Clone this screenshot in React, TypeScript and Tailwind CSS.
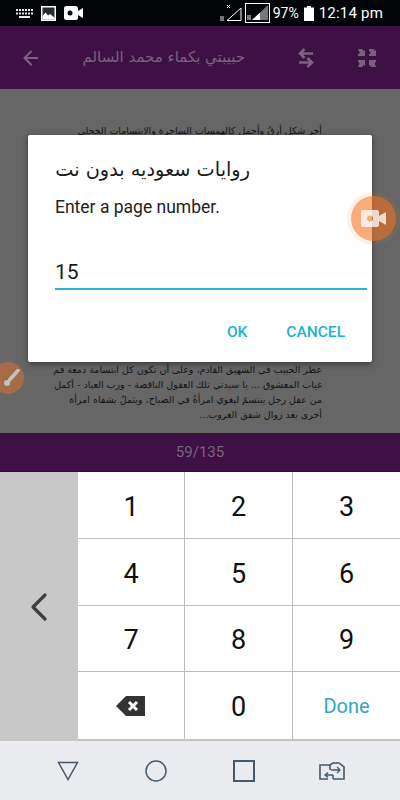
import { ArrowLeft, ChevronLeft } from "lucide-react";

const FONT_UI = "font-['Roboto','Noto_Sans',sans-serif]";

const keys = ["1", "2", "3", "4", "5", "6", "7", "8", "9"];

const StatusBar = () => (
    <div className="h-[26px] bg-[#020508] flex items-center pl-4 pr-[17px] text-white shrink-0">
        <svg width="17" height="9" viewBox="0 0 17 9" fill="#e8e8e8">
            <path d="M0 0h2v2H0zM3 0h2v2H3zM6 0h2v2H6zM9 0h2v2H9zM12 0h2v2h-2zM15 0h2v2h-2zM0 3.500h2v2H0zM3 3.500h2v2H3zM6 3.500h2v2H6zM9 3.500h2v2H9zM12 3.500h2v2h-2zM15 3.500h2v2h-2zM3 7h11v2H3z" />
        </svg>
        <svg className="ml-[8px]" width="15" height="15" viewBox="0 0 15 15">
            <rect x="0" y="0" width="15" height="15" fill="#fff" />
            <rect x="1.500" y="1.500" width="12" height="12" fill="#2a2a2a" />
            <path d="M1.500 13.500V10l3-3.500 2.500 3 2-1.500 4.500 3.500v2z" fill="#fff" />
        </svg>
        <svg className="ml-[8px]" width="19" height="14" viewBox="0 0 19 14">
            <rect x="0" y="0" width="14" height="14" rx="2.500" fill="#fff" />
            <path d="M14 5l5-3v10l-5-3z" fill="#fff" />
            <circle cx="6" cy="7" r="2.500" fill="#020508" />
        </svg>
        <div className="flex-1" />
        <svg width="22" height="18" viewBox="0 0 22 18">
            <path d="M7 16.500L21 4v12.500z" fill="none" stroke="#fff" strokeWidth="1" />
            <path d="M7 1l3 3M10 1L7 4" stroke="#fff" strokeWidth="1" />
            <rect x="0" y="12" width="4" height="5" fill="#777" />
        </svg>
        <svg className="ml-[3px]" width="25" height="20" viewBox="0 0 25 20">
            <rect x="0.500" y="0.500" width="24" height="19" fill="none" stroke="#fff" />
            <path d="M7 17L23 2v15z" fill="#777" />
            <path d="M7 17l8-7.500V17z" fill="#fff" />
            <rect x="2" y="12" width="4" height="5" fill="#777" />
        </svg>
        <span className={`ml-[3px] text-[14px] leading-none ${FONT_UI}`}>97%</span>
        <svg className="ml-[5px]" width="10" height="15" viewBox="0 0 10 15" fill="#fff">
            <rect x="3" y="0" width="4" height="2" />
            <rect x="0" y="1.500" width="10" height="13.500" />
        </svg>
        <span className={`ml-[5px] text-[15px] tracking-[0.2px] leading-none ${FONT_UI}`}>12:14 pm</span>
    </div>
);

const Toolbar = () => (
    <div className="h-[63px] bg-[#3e1045] flex items-center text-[#7c6280] shrink-0">
        <ArrowLeft className="ml-[20px]" size={22} strokeWidth={2.2} />
        <span dir="rtl" className="ml-[39px] w-[164px] text-[15px] whitespace-nowrap font-['DejaVu_Sans',sans-serif]">
            حبيبتي بكماء محمد السالم
        </span>
        <svg className="ml-[52px]" width="18" height="22" viewBox="0 0 18 22" fill="none" stroke="currentColor" strokeWidth="2.600">
            <path d="M16 6.500H3M7.500 2L3 6.500 7.500 11" />
            <path d="M2 15.500h13M10.500 11l4.500 4.500-4.500 4.500" />
        </svg>
        <svg className="ml-[43px]" width="18" height="18" viewBox="0 0 18 18" fill="currentColor">
            <path d="M0 0h4l1.500 2L7 1v6H0V5.500L2 4zM18 1v6h-7V5.500l2-1.500L11 2V0h5l.5 2zM0 11h7v6l-1.500-1L4 18H0l1.500-4L0 13zM11 11h7v2l-1.500 1 1.500 4h-5l-1-2-1 1z" />
        </svg>
    </div>
);

const Reader = () => (
    <div
        dir="rtl"
        className="relative flex-1 min-h-0 bg-[#666666] pt-[34px] pb-[11px] pl-[79px] pr-[78px] flex flex-col justify-between text-[9.5px] leading-[15px] text-[#141414] font-['DejaVu_Sans',sans-serif] whitespace-nowrap"
    >
        <p className="text-justify [text-align-last:justify]">أخر شكلٍ أرقُ وأجمل كالهمسات الساحرة والابتسامات الخجلى</p>
        <div>
            <p className="text-justify [text-align-last:justify]">عطر الحبيب في الشهيق القادم، وعلى أن تكون كل ابتسامة دمعة فم</p>
            <p className="text-justify [text-align-last:justify]">غياب المعشوق ... يا سيدتي تلك العقول الناقصة - ورب العباد - أكمل</p>
            <p className="text-justify [text-align-last:justify]">من عقل رجل يبتسمُ ليغوي امرأةً في الصباح، ويثملُ بشفاه امرأة</p>
            <p>أخرى بعد زوال شفق الغروب...</p>
        </div>
    </div>
);

const PageBar = () => (
    <div className={`h-[38px] bg-[#3e1045] flex items-center justify-center text-[15px] text-[#7c6280] shrink-0 ${FONT_UI}`}>
        59/135
    </div>
);

const Keypad = () => (
    <div className={`h-[270px] flex shrink-0 border-t border-[#1c1c1c] ${FONT_UI}`}>
        <div className="w-[78px] bg-[#c8c8c8] flex items-center justify-center text-[#3f3f3f]">
            <ChevronLeft size={48} strokeWidth={1.6} />
        </div>
        <div className="flex-1 grid grid-cols-[107px_108px_107px] grid-rows-[67px_67px_66px_67px] bg-white border-b-2 border-[#c4c4c4]">
            {keys.map((k, i) => (
                <div
                    key={k}
                    className={`flex items-center justify-center pt-[4px] text-[27px] text-[#111] border-b border-[#bdbdbd] ${
                        i % 3 < 2 ? "border-r" : ""
                    }`}
                >
                    {k}
                </div>
            ))}
            <div className="flex items-center justify-center border-r border-[#bdbdbd]">
                <svg width="30" height="20" viewBox="0 0 30 20">
                    <path d="M29 0H10L0 10l10 10h19z" fill="#333" />
                    <path d="M13 6l8 8M21 6l-8 8" stroke="#fff" strokeWidth="3" />
                </svg>
            </div>
            <div className="flex items-center justify-center pt-[4px] text-[27px] text-[#111] border-r border-[#bdbdbd]">0</div>
            <div className="flex items-center justify-center text-[20px] text-[#2ea6bd]">Done</div>
        </div>
    </div>
);

const NavBar = () => (
    <div className="h-[59px] shrink-0 bg-[#e9ebef] flex items-center text-[#46596a]">
        <svg className="ml-[57px]" width="22" height="20" viewBox="0 0 22 20" fill="none" stroke="currentColor" strokeWidth="1.500">
            <path d="M1.500 1.500h19L11 18.500z" />
        </svg>
        <svg className="ml-[66px]" width="22" height="22" viewBox="0 0 22 22" fill="none" stroke="currentColor" strokeWidth="1.500">
            <circle cx="11" cy="11" r="10" />
        </svg>
        <svg className="ml-[66px]" width="22" height="22" viewBox="0 0 22 22" fill="none" stroke="currentColor" strokeWidth="2">
            <rect x="1" y="1" width="20" height="20" />
        </svg>
        <svg className="ml-[64px]" width="26" height="18" viewBox="0 0 26 18" fill="none" stroke="currentColor" strokeWidth="1.600">
            <path d="M9 17H1V3h10l3-2h6l5 4v12H14" />
            <path d="M11 3v5M14 17v-4" />
            <path d="M12 8h9M18 5l3 3-3 3M14 13H6M9 10.500L6 13l3 2.500" strokeWidth="1.300" />
        </svg>
    </div>
);

const Dialog = () => (
    <div className={`absolute left-[28px] top-[135px] w-[344px] h-[227px] bg-white rounded-[2px] shadow-[0_2px_6px_rgba(0,0,0,0.45)] pt-[20px] pl-[27px] pr-[5px] ${FONT_UI}`}>
        <div dir="rtl" className="w-[195px] text-[19.3px] leading-[30px] text-[#1a1a1a] whitespace-nowrap font-['DejaVu_Sans',sans-serif]">
            روايات سعوديه بدون نت
        </div>
        <div className="mt-[10px] text-[17.5px] leading-[24px] text-[#222]">Enter a page number.</div>
        <div className="mt-[37px] h-[34px] pt-[2px] border-b-2 border-[#27b5d3] text-[21px] leading-[28px] text-[#1a1a1a]">15</div>
        <div className="mt-[32px] pr-[22px] flex justify-end gap-[39px] text-[15.5px] leading-[20px] font-medium text-[#18b4d4]">
            <span>OK</span>
            <span>CANCEL</span>
        </div>
    </div>
);

const FloatingButtons = () => (
    <>
        <div className="absolute left-[347px] top-[192px] w-[53px] h-[53px] rounded-full bg-[#f47321]/10 flex items-center justify-center">
            <div className="w-[45px] h-[45px] rounded-full bg-[#f47321]/55 flex items-center justify-center">
                <svg width="26" height="17" viewBox="0 0 26 17">
                    <path
                        d="M2 0h14a2 2 0 0 1 2 2v4l7-4v13l-7-4v4a2 2 0 0 1-2 2H2a2 2 0 0 1-2-2V2a2 2 0 0 1 2-2zm7 5.500a3 3 0 1 0 0 6 3 3 0 0 0 0-6z"
                        fill="#fff"
                        fillOpacity="0.75"
                        fillRule="evenodd"
                    />
                </svg>
            </div>
        </div>
        <div className="absolute left-[-8px] top-[362px] w-[32px] h-[32px] rounded-full bg-[#f47321]/45 flex items-center justify-center">
            <svg width="18" height="20" viewBox="0 0 18 20" className="ml-[7px]">
                <path d="M6.500 12L15 2.500" stroke="#c4c0bc" strokeWidth="3.500" strokeLinecap="round" />
                <circle cx="4" cy="15" r="3" fill="#c4c0bc" />
            </svg>
        </div>
    </>
);

export default function App() {
    return (
        <div className="relative w-[400px] h-[800px] flex flex-col overflow-hidden">
            <StatusBar />
            <Toolbar />
            <Reader />
            <PageBar />
            <Keypad />
            <NavBar />
            <Dialog />
            <FloatingButtons />
        </div>
    );
}
